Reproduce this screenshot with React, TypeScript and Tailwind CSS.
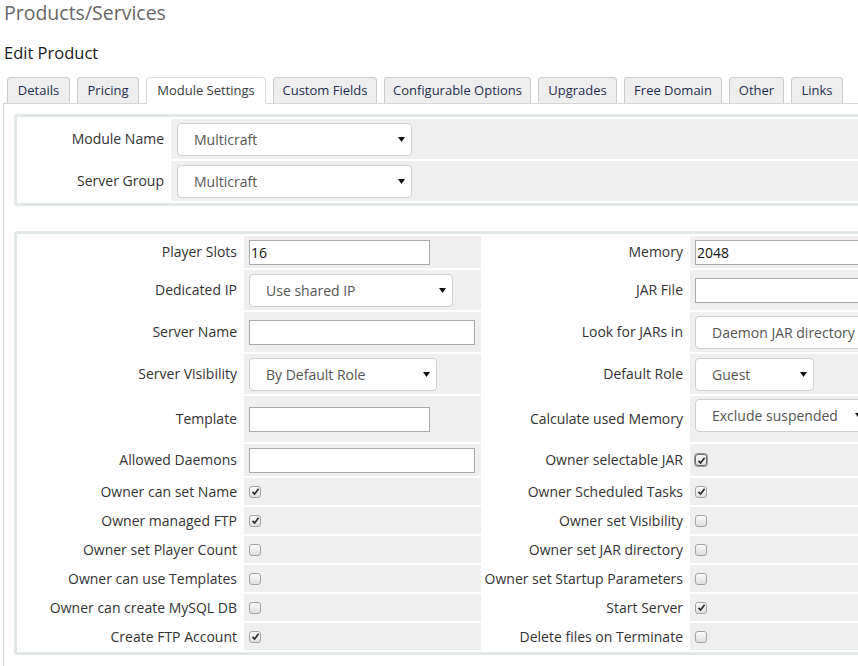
import React from "react";

type Field =
  | { kind: "input"; w: string; value?: string }
  | { kind: "select"; w: string; value: string; top?: boolean }
  | { kind: "check"; checked: boolean; focus?: boolean };

type Row = { h: string; l1: string; f1: Field; l2: string; f2: Field };

const tabs = [
  { name: "Details", w: "w-[63px]" },
  { name: "Pricing", w: "w-[62px]" },
  { name: "Module Settings", w: "w-[120px]", active: true },
  { name: "Custom Fields", w: "w-[104px]" },
  { name: "Configurable Options", w: "w-[147px]" },
  { name: "Upgrades", w: "w-[79px]" },
  { name: "Free Domain", w: "w-[98px]" },
  { name: "Other", w: "w-[55px]" },
  { name: "Links", w: "w-[52px]" },
];

const rows: Row[] = [
  { h: "h-[32px]", l1: "Player Slots", f1: { kind: "input", w: "w-[181px]", value: "16" }, l2: "Memory", f2: { kind: "input", w: "w-[226px]", value: "2048" } },
  { h: "h-[40px]", l1: "Dedicated IP", f1: { kind: "select", w: "w-[204px]", value: "Use shared IP" }, l2: "JAR File", f2: { kind: "input", w: "w-[226px]" } },
  { h: "h-[40px]", l1: "Server Name", f1: { kind: "input", w: "w-[226px]" }, l2: "Look for JARs in", f2: { kind: "select", w: "w-[200px]", value: "Daemon JAR directory" } },
  { h: "h-[40px]", l1: "Server Visibility", f1: { kind: "select", w: "w-[188px]", value: "By Default Role" }, l2: "Default Role", f2: { kind: "select", w: "w-[119px]", value: "Guest" } },
  { h: "h-[46px]", l1: "Template", f1: { kind: "input", w: "w-[181px]" }, l2: "Calculate used Memory", f2: { kind: "select", w: "w-[174px]", value: "Exclude suspended", top: true } },
  { h: "h-[32px]", l1: "Allowed Daemons", f1: { kind: "input", w: "w-[226px]" }, l2: "Owner selectable JAR", f2: { kind: "check", checked: true, focus: true } },
  { h: "h-[27px]", l1: "Owner can set Name", f1: { kind: "check", checked: true }, l2: "Owner Scheduled Tasks", f2: { kind: "check", checked: true } },
  { h: "h-[27px]", l1: "Owner managed FTP", f1: { kind: "check", checked: true }, l2: "Owner set Visibility", f2: { kind: "check", checked: false } },
  { h: "h-[27px]", l1: "Owner set Player Count", f1: { kind: "check", checked: false }, l2: "Owner set JAR directory", f2: { kind: "check", checked: false } },
  { h: "h-[27px]", l1: "Owner can use Templates", f1: { kind: "check", checked: false }, l2: "Owner set Startup Parameters", f2: { kind: "check", checked: false } },
  { h: "h-[27px]", l1: "Owner can create MySQL DB", f1: { kind: "check", checked: false }, l2: "Start Server", f2: { kind: "check", checked: true } },
  { h: "h-[27px]", l1: "Create FTP Account", f1: { kind: "check", checked: true }, l2: "Delete files on Terminate", f2: { kind: "check", checked: false } },
];

function Arrow() {
  return (
    <svg width="7" height="5" viewBox="0 0 7 5" className="shrink-0">
      <polygon points="0,0 7,0 3.5,5" fill="#111" />
    </svg>
  );
}

function Select({ w, value }: { w: string; value: string }) {
  return (
    <div
      className={`${w} flex h-[33px] shrink-0 items-center justify-between rounded-[4px] border border-[#cfcfcf] bg-white pl-[16px] pr-[6px] text-[14px] text-[#555]`}
    >
      <span className="whitespace-nowrap">{value}</span>
      <Arrow />
    </div>
  );
}

function Input({ w, value }: { w: string; value?: string }) {
  return (
    <div
      className={`${w} flex h-[25px] shrink-0 items-center border border-[#a9a9a9] bg-white pl-[1px] text-[14px] text-[#111]`}
    >
      {value}
    </div>
  );
}

function Check({ checked, focus }: { checked: boolean; focus?: boolean }) {
  return (
    <span
      className={`flex h-[12px] w-[12px] items-center justify-center rounded-[3px] border bg-gradient-to-b from-[#fbfbfb] to-[#dedede] ${
        focus ? "border-[#6b6b6b] shadow-[0_0_0_1px_#9a9a9a]" : "border-[#a3a3a3]"
      }`}
    >
      {checked && (
        <svg width="9" height="9" viewBox="0 0 9 9">
          <path d="M1.5 4.8 L3.6 7 L7.6 1.8" fill="none" stroke="#2a2a2a" strokeWidth="1.7" />
        </svg>
      )}
    </span>
  );
}

function FieldCell({ f, h }: { f: Field; h: string }) {
  return (
    <div
      className={`${h} flex bg-[#efefef] pl-[5px] ${
        f.kind === "select" && f.top ? "items-start pt-[3px]" : "items-center"
      }`}
    >
      {f.kind === "input" && <Input w={f.w} value={f.value} />}
      {f.kind === "select" && <Select w={f.w} value={f.value} />}
      {f.kind === "check" && <Check checked={f.checked} focus={f.focus} />}
    </div>
  );
}

function Label({ text, h }: { text: string; h: string }) {
  return (
    <div className={`${h} flex items-center justify-end whitespace-nowrap pb-px pr-[5px] text-[14px] text-[#333]`}>
      {text}
    </div>
  );
}

export default function App() {
  return (
    <div className="h-[666px] w-[858px] overflow-hidden bg-white font-['Open_Sans',sans-serif]">
      <h1 className="pl-[4px] pt-[1px] text-[19.5px] leading-[24px] text-[#666]">Products/Services</h1>
      <h2 className="mt-[18px] pl-[4px] text-[16.5px] leading-[20px] text-[#1a1a1a]">Edit Product</h2>

      {/* tabs */}
      <div className="mt-[14px] flex gap-[7px] pl-[7px]">
        {tabs.map((t) => (
          <div
            key={t.name}
            className={`${t.w} relative flex h-[26px] shrink-0 items-center justify-center whitespace-nowrap rounded-t-[4px] border text-[13px] ${
              t.active
                ? "z-10 -mb-px h-[27px] border-[#dcdcdc] border-b-white bg-white text-[#3a3a3a]"
                : "border-[#cccccc] border-b-0 bg-[#eeeeee] text-[#1f2d52]"
            }`}
          >
            {t.name}
          </div>
        ))}
      </div>

      <div className="ml-[3px] border-l border-t border-[#d6d6d6] pl-[10px] pt-[10px]">
        {/* module box */}
        <div className="w-[918px] rounded-[3px] border-[3px] border-[#e2e7e9] p-[2px]">
          <div className="grid grid-cols-[150px_1fr] gap-[2px]">
            <Label text="Module Name" h="h-[40px]" />
            <div className="flex h-[40px] items-center bg-[#efefef] pl-[6px]">
              <Select w="w-[235px]" value="Multicraft" />
            </div>
            <Label text="Server Group" h="h-[40px]" />
            <div className="flex h-[40px] items-center bg-[#efefef] pl-[6px]">
              <Select w="w-[235px]" value="Multicraft" />
            </div>
          </div>
        </div>

        {/* settings box */}
        <div className="mt-[25px] w-[918px] rounded-[3px] border-[3px] border-[#e2e7e9] p-[2px]">
          <div className="grid grid-cols-[223px_237px_205px_237px] gap-[2px]">
            {rows.map((r) => (
              <React.Fragment key={r.l1}>
                <Label text={r.l1} h={r.h} />
                <FieldCell f={r.f1} h={r.h} />
                <Label text={r.l2} h={r.h} />
                <FieldCell f={r.f2} h={r.h} />
              </React.Fragment>
            ))}
          </div>
        </div>
        <div className="h-[20px]" />
      </div>
    </div>
  );
}
